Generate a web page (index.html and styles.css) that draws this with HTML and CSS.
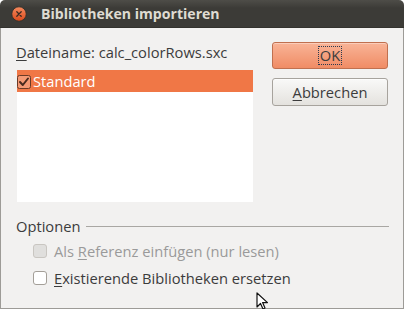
FILE: index.html
```html
<!DOCTYPE html>
<html>
<head>
<meta charset="utf-8">
<link rel="stylesheet" href="styles.css">
</head>
<body>
<div class="window">
  <div class="titlebar">
    <span class="close">
      <svg width="16" height="16" viewBox="0 0 16 16">
        <defs>
          <linearGradient id="cg" x1="0" y1="0" x2="0" y2="1">
            <stop offset="0" stop-color="#f58a5e"/>
            <stop offset="1" stop-color="#dc4a1c"/>
          </linearGradient>
        </defs>
        <circle cx="8" cy="8" r="7.2" fill="url(#cg)" stroke="#2f2e2a" stroke-width="0.8"/>
        <path d="M5.8 5.8 L10.2 10.2 M10.2 5.8 L5.8 10.2" stroke="#3a2a22" stroke-width="1.3" stroke-linecap="round"/>
      </svg>
    </span>
    <span class="title">Bibliotheken importieren</span>
  </div>
  <div class="content">
    <div class="top">
      <div class="left">
        <div class="label"><u>D</u>ateiname: calc_colorRows.sxc</div>
        <div class="listbox">
          <div class="row selected">
            <span class="rowcheck">
              <svg width="14" height="14" viewBox="0 0 14 14">
                <rect x="0.5" y="0.5" width="13" height="13" rx="2" fill="rgba(255,255,255,0.25)" stroke="#6b3a26" stroke-width="1"/>
                <path d="M3 7 L5.8 10 L11 3.5" fill="none" stroke="#4a2a1e" stroke-width="2" stroke-linecap="round" stroke-linejoin="round"/>
              </svg>
            </span>
            <span>Standard</span>
          </div>
        </div>
      </div>
      <div class="buttons">
        <button class="btn primary"><span class="focus">OK</span></button>
        <button class="btn"><u>A</u>bbrechen</button>
      </div>
    </div>
    <div class="options">
      <div class="options-head"><span>Optionen</span><span class="rule"></span></div>
      <div class="opt disabled"><span class="box"></span><span>Als <u>R</u>eferenz einfügen (nur lesen)</span></div>
      <div class="opt"><span class="box"></span><span><u>E</u>xistierende Bibliotheken ersetzen</span></div>
    </div>
    <svg class="cursor" width="14" height="20" viewBox="0 0 14 20">
      <path d="M1 1 L1 15 L4.5 11.5 L7 17 L9 16 L6.6 10.6 L11.5 10.6 Z" fill="#ffffff" stroke="#111111" stroke-width="1.2" stroke-linejoin="round"/>
    </svg>
  </div>
</div>
</body>
</html>
```

FILE: styles.css
```css
html, body {
  margin: 0;
  padding: 0;
  background: #ffffff;
}
body {
  width: 405px;
  height: 310px;
  overflow: hidden;
  font-family: "Open Sans", "DejaVu Sans", sans-serif;
  font-size: 14.7px;
  color: #3c3c3c;
}
u {
  text-decoration: underline;
  text-underline-offset: 2px;
}
.window {
  width: 404px;
  height: 309px;
  display: flex;
  flex-direction: column;
  border-radius: 5px 5px 0 0;
  overflow: hidden;
}
.titlebar {
  height: 28px;
  flex: none;
  display: flex;
  align-items: center;
  background: linear-gradient(#4e4d48, #3c3b37 30%, #3c3b37);
  border-bottom: 1px solid #33322e;
  box-sizing: border-box;
}
.close {
  width: 16px;
  height: 16px;
  margin-left: 11px;
  margin-top: 1px;
  display: flex;
}
.title {
  margin-left: 14px;
  font-family: "Open Sans", "DejaVu Sans", sans-serif;
  font-weight: bold;
  font-size: 14.1px;
  color: #dfdbd2;
}
.content {
  position: relative;
  flex: 1;
  background: #f2f1f0;
  border: 1px solid #9d9b97;
  border-top: none;
  padding: 14px 15px 0 15px;
}
.top {
  display: flex;
  gap: 19px;
}
.left {
  width: 237px;
}
.label {
  height: 18px;
  line-height: 18px;
  white-space: nowrap;
  margin-top: 1px;
}
.listbox {
  margin-top: 9px;
  margin-left: 1px;
  width: 236px;
  height: 132px;
  background: #ffffff;
}
.row {
  height: 22px;
  display: flex;
  align-items: center;
  gap: 2px;
}
.row.selected {
  background: #f07746;
  color: #ffffff;
}
.rowcheck {
  display: flex;
  margin-left: 0;
  margin-top: 1px;
}
.buttons {
  width: 116px;
  display: flex;
  flex-direction: column;
  gap: 9px;
}
.btn {
  height: 27px;
  border-radius: 3px;
  border: 1px solid #a7a39d;
  background: linear-gradient(#f9f9f8, #e4e2de);
  font-family: "Open Sans", "DejaVu Sans", sans-serif;
  font-size: 14.7px;
  color: #3c3c3c;
  padding: 0;
  display: flex;
  align-items: center;
  justify-content: center;
  box-shadow: inset 0 1px 0 rgba(255,255,255,0.7);
}
.btn + .btn {
  height: 28px;
}
.btn.primary {
  border-color: #c0704f;
  background: linear-gradient(#f9b497, #f08c65);
  box-shadow: inset 0 1px 0 rgba(255,255,255,0.35);
}
.focus {
  outline: 1px dotted #2a3a50;
  padding: 0 1px;
  line-height: 17px;
}
.options {
  margin-top: 15px;
  margin-right: -1px;
}
.options-head {
  height: 18px;
  line-height: 18px;
  display: flex;
  align-items: center;
  gap: 6px;
}
.rule {
  flex: 1;
  height: 1px;
  background: #a9a7a3;
}
.opt {
  height: 20px;
  display: flex;
  align-items: center;
  gap: 7px;
  margin-left: 17px;
  margin-top: 7px;
}
.options-head + .opt {
  margin-top: 6px;
}
.box {
  width: 12px;
  height: 12px;
  border: 1px solid #a49f98;
  border-radius: 3px;
  background: #ffffff;
  flex: none;
}
.opt.disabled {
  color: #9a9a9a;
}
.opt.disabled .box {
  background: #e0dfdd;
  border-color: #c9c6c1;
}
.cursor {
  position: absolute;
  left: 255px;
  top: 264px;
}
```
